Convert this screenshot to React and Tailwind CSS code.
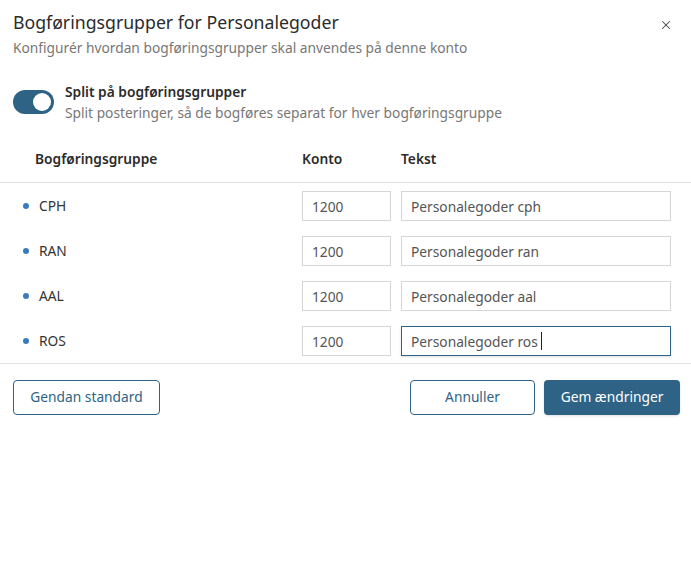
import React, { useState } from 'react';
import { X } from 'lucide-react';

const groups = [
  { code: 'CPH', konto: '1200', tekst: 'Personalegoder cph' },
  { code: 'RAN', konto: '1200', tekst: 'Personalegoder ran' },
  { code: 'AAL', konto: '1200', tekst: 'Personalegoder aal' },
  { code: 'ROS', konto: '1200', tekst: 'Personalegoder ros', focused: true },
];

function Toggle({ on, onChange }) {
  return (
    <button
      onClick={() => onChange(!on)}
      className={`w-[41px] h-[24px] rounded-full flex items-center px-[3px] shrink-0 ${
        on ? 'bg-[#2e6385] justify-end' : 'bg-gray-300 justify-start'
      }`}
    >
      <span className="w-[18px] h-[18px] rounded-full bg-white block" />
    </button>
  );
}

export default function App() {
  const [split, setSplit] = useState(true);

  return (
    <div
      className="w-[691px] h-[561px] bg-white text-[#333] relative"
      style={{ fontFamily: '"Noto Sans", "Open Sans", sans-serif' }}
    >
      {/* Header */}
      <div className="px-[13px] pt-[9px]">
        <h2 className="text-[17.7px] leading-[26px] text-[#2b2b2b]">
          Bogføringsgrupper for Personalegoder
        </h2>
        <p className="text-[13.75px] leading-[21px] text-[#777] mt-[2px]">
          Konfigurér hvordan bogføringsgrupper skal anvendes på denne konto
        </p>
      </div>
      <button className="absolute top-[18px] right-[18px] text-[#444]">
        <X size={14} strokeWidth={1.75} />
      </button>

      {/* Split toggle */}
      <div className="flex items-center gap-[11px] px-[13px] mt-[23px]">
        <Toggle on={split} onChange={setSplit} />
        <div>
          <div className="text-[13.75px] leading-[21px] font-semibold text-[#2b2b2b]">
            Split på bogføringsgrupper
          </div>
          <div className="text-[13.75px] leading-[21px] text-[#777]">
            Split posteringer, så de bogføres separat for hver bogføringsgruppe
          </div>
        </div>
      </div>

      {/* Table header */}
      <div className="flex items-center h-[46px] mt-[14px] border-b border-[#e2e2e2] text-[13.75px] font-semibold text-[#2b2b2b]">
        <div className="w-[302px] pl-[35px]">Bogføringsgruppe</div>
        <div className="w-[99px]">Konto</div>
        <div>Tekst</div>
      </div>

      {/* Rows */}
      <div className="flex flex-col gap-[15px] pt-[8px] pb-[7px] border-b border-[#e2e2e2]">
        {groups.map((g) => (
          <div key={g.code} className="flex items-center h-[30px]">
            <div className="w-[302px] pl-[23px] flex items-center gap-[10px] text-[13.75px]">
              <span className="w-[6px] h-[6px] rounded-full bg-[#3a7bbf]" />
              <span>{g.code}</span>
            </div>
            <input
              defaultValue={g.konto}
              className="w-[89px] h-[30px] border border-[#d6d6d6] px-[9px] text-[13.75px] text-[#555] outline-none"
            />
            <div className="relative ml-[10px]">
              <input
                defaultValue={g.tekst}
                className={`w-[270px] h-[30px] border px-[9px] text-[13.75px] text-[#555] outline-none ${
                  g.focused ? 'border-[#2e6385] shadow-sm' : 'border-[#d6d6d6]'
                }`}
              />
              {g.focused && (
                <span className="absolute left-[140px] top-[6px] w-px h-[18px] bg-[#222]" />
              )}
            </div>
          </div>
        ))}
      </div>

      {/* Footer */}
      <div className="flex items-center justify-between pl-[13px] pt-[16px] pr-[11px]">
        <button className="h-[35px] w-[147px] rounded-[4px] border border-[#2e6385] text-[#2e6385] text-[13.75px]">
          Gendan standard
        </button>
        <div className="flex gap-[9px]">
          <button className="h-[35px] w-[125px] rounded-[4px] border border-[#2e6385] text-[#2e6385] text-[13.75px]">
            Annuller
          </button>
          <button className="h-[35px] w-[136px] rounded-[4px] bg-[#2e6385] text-white text-[13.75px] shadow-sm">
            Gem ændringer
          </button>
        </div>
      </div>
    </div>
  );
}
